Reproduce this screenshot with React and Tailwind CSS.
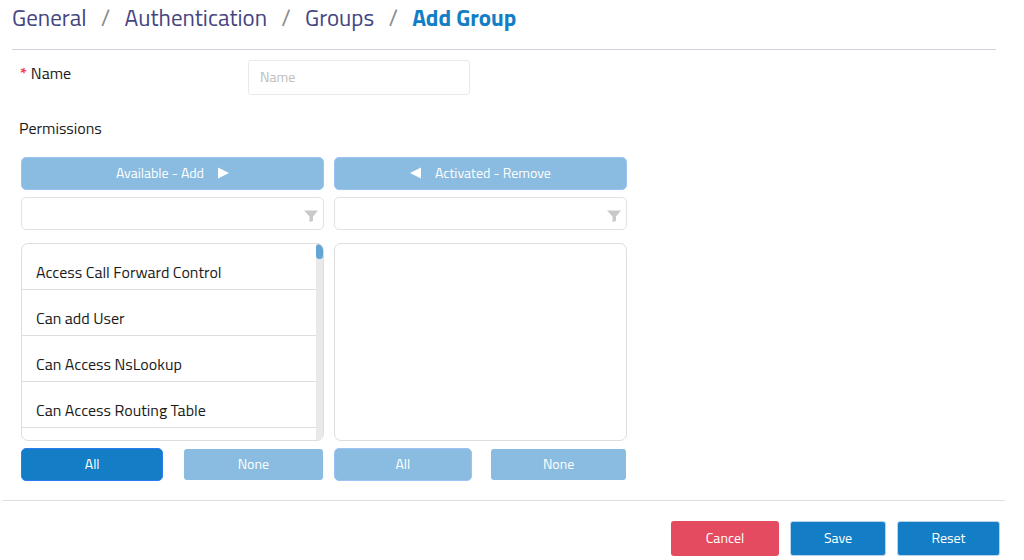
import React from "react";

const crumbs = ["General", "Authentication", "Groups"];

const permissions = [
  "Access Call Forward Control",
  "Can add User",
  "Can Access NsLookup",
  "Can Access Routing Table",
];

function FunnelIcon() {
  return (
    <svg viewBox="0 0 14 12" className="pointer-events-none absolute right-1.5 bottom-2 h-3 w-3.5 fill-[#c9c9c9]" aria-hidden="true">
      <path d="M0 0.5H14L9 6.5V11L5.5 12V6.5Z" />
    </svg>
  );
}

function Arrow({ left = false }) {
  return (
    <svg viewBox="0 0 11 12" className="h-3 w-[11px] fill-white" aria-hidden="true">
      <path d={left ? "M11 0.5V11.5L0 6Z" : "M0 0.5V11.5L11 6Z"} />
    </svg>
  );
}

function Filter({ label }) {
  return (
    <div className="relative">
      <input
        type="text"
        aria-label={label}
        className="block h-[33px] w-full rounded-[5px] border border-[#e2e2e2] bg-white pr-7 pl-3 text-sm outline-none"
      />
      <FunnelIcon />
    </div>
  );
}

function MoveButton({ children }) {
  return (
    <button
      type="button"
      className="flex h-[33px] w-full items-center justify-center gap-[14px] rounded-[5px] border border-[#9dc3f5] bg-[#89bce0] pb-0.5 text-sm text-white"
    >
      {children}
    </button>
  );
}

export default function App() {
  return (
    <main className="bg-white font-['Titillium_Web',Roboto,sans-serif] text-[#1b1b1b]">
      <header className="mr-7 ml-3 border-b border-[#d2d2dc]">
        <nav aria-label="Breadcrumb">
          <ol className="flex h-[49px] items-start pt-[3px] text-[23px] leading-[30px] text-[#45457f]">
            {crumbs.map((c) => (
              <li key={c} className="flex">
                <a href="#">{c}</a>
                <span className="w-[38px] text-center text-[#8c8c8c]">/</span>
              </li>
            ))}
            <li aria-current="page" className="font-bold text-[#137ec5]">
              Add Group
            </li>
          </ol>
        </nav>
      </header>

      <form onSubmit={(e) => e.preventDefault()}>
        <div className="flex items-start pt-[10px] pl-5">
          <label htmlFor="name" className="flex w-[228px] gap-1 pt-[3px] text-base leading-5">
            <span className="font-bold text-[#ff3b4b]">*</span>
            Name
          </label>
          <input
            id="name"
            type="text"
            placeholder="Name"
            className="h-[35px] w-[222px] rounded-[3px] border border-[#e6eaea] px-[11px] pb-0.5 text-sm outline-none placeholder:text-[#bdbdbd]"
          />
        </div>

        <h2 className="mt-[23px] pl-[19px] text-base leading-5">Permissions</h2>

        <div className="mt-[19px] ml-[21px] grid max-w-[606px] grid-cols-[303fr_293fr] gap-x-[10px]">
          <section aria-label="Available permissions" className="flex flex-col">
            <MoveButton>
              Available - Add
              <Arrow />
            </MoveButton>
            <div className="mt-[7px]">
              <Filter label="Filter available permissions" />
            </div>
            <div className="mt-[13px] flex h-[198px] overflow-hidden rounded-[7px] border border-[#dedede]">
              <ul className="flex-1 text-base leading-5">
                {permissions.map((p) => (
                  <li key={p} className="flex h-[46px] items-end border-b border-[#dedede] pb-[7px] pl-[14px]">
                    {p}
                  </li>
                ))}
              </ul>
              <div className="w-[7px] bg-[#e9e9e9]">
                <div className="h-[15px] rounded-full bg-[#62a5d4]" />
              </div>
            </div>
            <div className="mt-[7px] flex items-center justify-between text-sm text-white">
              <button type="button" className="h-[33px] w-[47%] rounded-[5px] border border-[#2b7cf0] bg-[#137ec5] pb-0.5">
                All
              </button>
              <button type="button" className="mr-px h-[31px] w-[46%] rounded-[3px] bg-[#89bce0] pb-0.5">
                None
              </button>
            </div>
          </section>

          <section aria-label="Activated permissions" className="flex flex-col">
            <MoveButton>
              <Arrow left />
              Activated - Remove
            </MoveButton>
            <div className="mt-[7px]">
              <Filter label="Filter activated permissions" />
            </div>
            <div className="mt-[13px] h-[198px] rounded-[7px] border border-[#dedede]" />
            <div className="mt-[7px] flex items-center justify-between text-sm text-white">
              <button type="button" className="h-[33px] w-[47%] rounded-[5px] border border-[#9dc3f5] bg-[#89bce0] pb-0.5">
                All
              </button>
              <button type="button" className="mr-px h-[31px] w-[46%] rounded-[3px] bg-[#89bce0] pb-0.5">
                None
              </button>
            </div>
          </section>
        </div>

        <footer className="mt-[19px] mr-[19px] ml-0.5 flex justify-end gap-[11px] border-t border-[#dcdfe6] pt-5 pr-[5px] text-sm text-white">
          <button type="button" className="h-[35px] w-[108px] rounded-[3px] bg-[#e44b60] pb-0.5">
            Cancel
          </button>
          <button type="submit" className="h-[35px] w-24 rounded-[3px] border border-[#b9d3e6] bg-[#137ec5] pb-0.5">
            Save
          </button>
          <button type="reset" className="h-[35px] w-[103px] rounded-[3px] border border-[#b9d3e6] bg-[#137ec5] pb-0.5">
            Reset
          </button>
        </footer>
      </form>
    </main>
  );
}
